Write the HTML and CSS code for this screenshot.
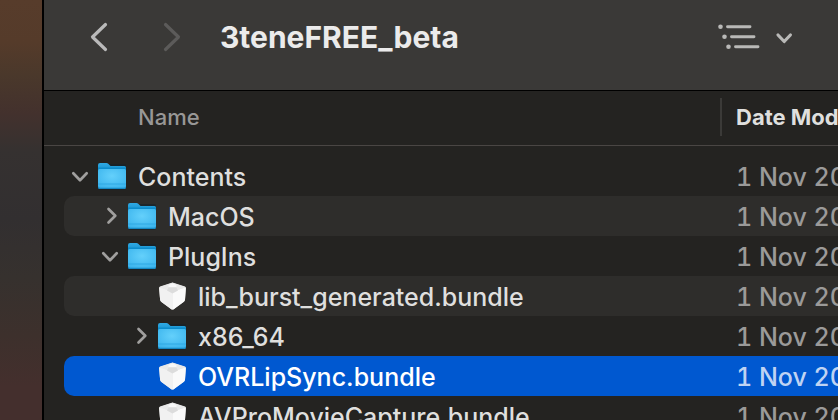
FILE: index.html
```
<!DOCTYPE html>
<html lang="en">
<head>
  <meta charset="UTF-8">
  <title>3teneFREE_beta</title>
  <link rel="stylesheet" href="styles.css">
</head>
<body>
  <!-- shared icons -->
  <svg class="defs" aria-hidden="true">
    <defs>
      <linearGradient id="folder-back" x1="0" y1="0" x2="0" y2="1">
        <stop offset="0" stop-color="#2fa9e4"/>
        <stop offset="1" stop-color="#0b86c4"/>
      </linearGradient>
      <radialGradient id="folder-front" cx="0.5" cy="0.35" r="0.75">
        <stop offset="0" stop-color="#64d0fb"/>
        <stop offset="1" stop-color="#38b2ec"/>
      </radialGradient>
    </defs>
    <symbol id="folder" viewBox="0 0 28 28">
      <path d="M0 4Q0 2 2 2H26Q28 2 28 4V26Q28 28 26 28H2Q0 28 0 26Z" fill="#12222b" opacity="0.6"/>
      <path d="M0 3Q0 1 2 1H8.500Q9.500 1 10.300 1.800L12.500 4H26.500Q28 4 28 5.500V12H0Z" fill="url(#folder-back)"/>
      <path d="M0 5.500H28V9H0Z" fill="#0c8dcd"/>
      <path d="M0 8.500Q0 7 1.500 7H26.500Q28 7 28 8.500V25Q28 27 26 27H2Q0 27 0 25Z" fill="url(#folder-front)"/>
      <path d="M0 22H28" stroke="#2fa8e4" stroke-width="1"/>
      <path d="M0 24V25Q0 27 2 27H26Q28 27 28 25V24Q28 25.700 26 25.700H2Q0 25.700 0 24Z" fill="#1689c4"/>
    </symbol>
    <symbol id="bundle" viewBox="0 0 28 28">
      <path d="M14.500 0.500L27 4.500Q28 5 27.900 6L27 17.500Q26.800 19 25.500 20L16 27Q14.500 28 13 27L3.500 20Q2.300 19 2.100 17.500L1 6Q1 5 2 4.500Z" fill="#e8e8e8"/>
      <path d="M14.500 9.500L27.800 5.500L27 17.500Q26.800 19 25.500 20L16 27Q15.200 27.500 14.500 27.500Z" fill="#fafafa"/>
      <path d="M14.500 9.500L1.200 5.500L2.100 17.500Q2.300 19 3.500 20L13 27Q13.800 27.500 14.500 27.500Z" fill="#f1f1f1"/>
      <path d="M14.500 0.800L27 5L14.500 10.500L2 5Z" fill="#e9e9e9"/>
      <path d="M14.500 1.500L18.500 3V5H10.500V3Z" fill="#f8f8f8"/>
      <path d="M10.500 5.500H18.500L20 8.500L14.500 11.500L9 8.500Z" fill="#dcdcdc"/>
    </symbol>
    <symbol id="chevron-down" viewBox="0 0 24 24">
      <path d="M5.300 9.300L12 16.200L18.700 9.300" fill="none" stroke="currentColor" stroke-width="2.700" stroke-linecap="round" stroke-linejoin="round"/>
    </symbol>
    <symbol id="chevron-right" viewBox="0 0 24 24">
      <path d="M10.500 5L17.300 11.800L10.500 18.500" fill="none" stroke="currentColor" stroke-width="2.700" stroke-linecap="round" stroke-linejoin="round"/>
    </symbol>
  </svg>

  <main class="window">
    <header class="toolbar">
      <nav class="nav">
        <button class="nav-btn" aria-label="Back">
          <svg width="20" height="32" viewBox="0 0 20 32"><path d="M16.500 3.500L3.500 16L16.500 28.500" fill="none" stroke="currentColor" stroke-width="3.200" stroke-linecap="round" stroke-linejoin="round"/></svg>
        </button>
        <button class="nav-btn" aria-label="Forward" disabled>
          <svg width="20" height="32" viewBox="0 0 20 32"><path d="M3.500 3.500L16.500 16L3.500 28.500" fill="none" stroke="currentColor" stroke-width="3.200" stroke-linecap="round" stroke-linejoin="round"/></svg>
        </button>
      </nav>
      <h1 class="title">3teneFREE_beta</h1>
      <button class="view-btn" aria-label="View options">
        <svg width="76" height="28" viewBox="0 0 76 28" stroke="currentColor" stroke-linecap="round" fill="currentColor">
          <g stroke="none">
            <circle cx="2.500" cy="3.800" r="2.300"/>
            <circle cx="6.500" cy="13.800" r="2.300"/>
            <circle cx="10.500" cy="23.800" r="2.300"/>
          </g>
          <path d="M9.500 3.800H32M13.500 13.800H36M17.500 23.800H40" stroke-width="2.900"/>
          <path d="M60 12L66.200 18.500L72.400 12" fill="none" stroke-width="3.200" stroke-linejoin="round"/>
        </svg>
      </button>
    </header>

    <table class="files">
      <colgroup>
        <col class="col-name">
        <col class="col-date">
      </colgroup>
      <thead>
        <tr>
          <th class="name-head">Name</th>
          <th class="date-head"><span>Date Modified</span></th>
        </tr>
      </thead>
      <tbody>
        <tr>
          <td><div class="cell">
            <button class="toggle" aria-label="Collapse Contents"><svg><use href="#chevron-down"/></svg></button>
            <svg class="icon"><use href="#folder"/></svg>
            <span>Contents</span>
          </div></td>
          <td><div class="cell date">1 Nov 2022</div></td>
        </tr>
        <tr class="striped">
          <td><div class="cell level-1">
            <button class="toggle" aria-label="Expand MacOS"><svg><use href="#chevron-right"/></svg></button>
            <svg class="icon"><use href="#folder"/></svg>
            <span>MacOS</span>
          </div></td>
          <td><div class="cell date">1 Nov 2022</div></td>
        </tr>
        <tr>
          <td><div class="cell level-1">
            <button class="toggle" aria-label="Collapse PlugIns"><svg><use href="#chevron-down"/></svg></button>
            <svg class="icon"><use href="#folder"/></svg>
            <span>PlugIns</span>
          </div></td>
          <td><div class="cell date">1 Nov 2022</div></td>
        </tr>
        <tr class="striped">
          <td><div class="cell level-2">
            <span class="toggle"></span>
            <svg class="icon"><use href="#bundle"/></svg>
            <span>lib_burst_generated.bundle</span>
          </div></td>
          <td><div class="cell date">1 Nov 2022</div></td>
        </tr>
        <tr>
          <td><div class="cell level-2">
            <button class="toggle" aria-label="Expand x86_64"><svg><use href="#chevron-right"/></svg></button>
            <svg class="icon"><use href="#folder"/></svg>
            <span>x86_64</span>
          </div></td>
          <td><div class="cell date">1 Nov 2022</div></td>
        </tr>
        <tr class="selected">
          <td><div class="cell level-2">
            <span class="toggle"></span>
            <svg class="icon"><use href="#bundle"/></svg>
            <span>OVRLipSync.bundle</span>
          </div></td>
          <td><div class="cell date">1 Nov 2022</div></td>
        </tr>
        <tr>
          <td><div class="cell level-2">
            <span class="toggle"></span>
            <svg class="icon"><use href="#bundle"/></svg>
            <span>AVProMovieCapture.bundle</span>
          </div></td>
          <td><div class="cell date">1 Nov 2022</div></td>
        </tr>
      </tbody>
    </table>
  </main>
</body>
</html>
```
FILE: styles.css
```
* {
  box-sizing: border-box;
}
body {
  margin: 0;
  height: 100vh;
  padding-left: 42px;
  overflow: hidden;
  font-family: Inter, "Liberation Sans", sans-serif;
  color: #dfdfde;
  background: linear-gradient(#573c2b 0, #553b2a 10%, #4a382b 18%, #43312d 27%, #353130 36%, #322f30 52%, #36312e 66%, #3d302c 80%, #442f2d 92%, #442f2d 100%);
}
button {
  padding: 0;
  border: 0;
  background: none;
  color: inherit;
  font: inherit;
}
svg {
  display: block;
}
.defs {
  position: absolute;
  width: 0;
  height: 0;
}
.window {
  height: 100%;
  overflow: hidden;
  border-left: 2px solid #000;
  background: #242321;
}

/* toolbar */
.toolbar {
  display: flex;
  align-items: center;
  height: 91px;
  padding: 0 44px 16px 45px;
  background: #3a3937;
  border-bottom: 1px solid #000;
}
.nav {
  display: flex;
  gap: 53px;
  margin-right: 38px;
}
.nav-btn {
  color: #bababa;
}
.nav-btn:disabled {
  color: #5c5b5a;
}
.title {
  flex: 1;
  margin: 0;
  font-size: 30px;
  line-height: 36px;
  font-weight: 700;
  color: #ebebeb;
}
.view-btn {
  color: #b9b9b7;
}

/* file list */
.files {
  table-layout: fixed;
  width: 1000px;
  border-spacing: 0;
}
.col-name {
  width: 676px;
}
th {
  height: 55px;
  padding: 0 0 2px;
  border-bottom: 1px solid #4a4644;
  font-size: 22px;
  line-height: 38px;
  text-align: left;
}
.name-head {
  padding-left: 94px;
  font-weight: 500;
  color: #989796;
}
.date-head span {
  display: block;
  padding-left: 14px;
  border-left: 2px solid #3b3a38;
  font-weight: 700;
}
td {
  padding: 0;
}
td:first-child {
  padding-left: 20px;
}
tbody tr:first-child td {
  padding-top: 10px;
}
.cell {
  display: flex;
  align-items: center;
  height: 40px;
  padding-left: 4px;
  font-size: 25px;
  font-weight: 500;
  line-height: 42px;
  white-space: nowrap;
}
td:first-child .cell {
  align-items: flex-start;
  border-radius: 10px 0 0 10px;
}
td:first-child .level-1 {
  padding-left: 34px;
}
td:first-child .level-2 {
  padding-left: 64px;
}
.date {
  align-items: flex-start;
  padding-left: 16px;
  font-variant-numeric: tabular-nums;
  color: #9b9a99;
}
.toggle {
  width: 24px;
  height: 24px;
  margin: 8px 6px 0 0;
  color: #a09f9e;
}
.toggle svg {
  width: 24px;
  height: 24px;
}
.icon {
  width: 28px;
  height: 28px;
  margin: 6px 12px 0 0;
}
.striped .cell {
  background: #2e2d2b;
}
.selected .cell {
  background: #0058d0;
  color: #fff;
}
.selected .date {
  color: #bfd3f3;
}
```
